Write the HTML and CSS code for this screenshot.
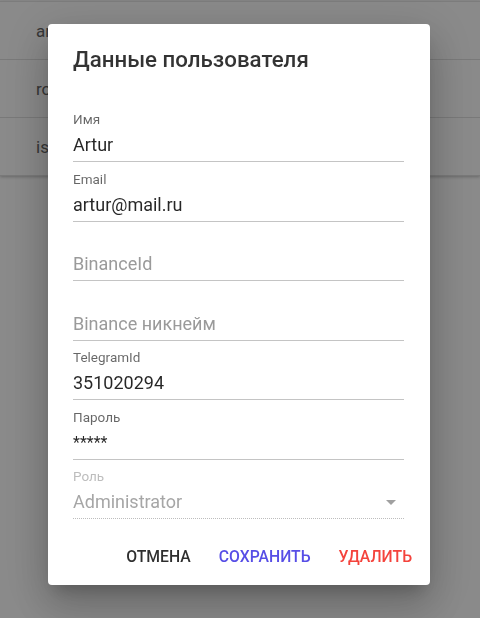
FILE: index.html
```html
<!DOCTYPE html>
<html lang="ru">
<head>
<meta charset="utf-8">
<title>Данные пользователя</title>
<link rel="stylesheet" href="styles.css">
</head>
<body>
<div class="table">
  <div class="row"><span class="cell">artur</span></div>
  <div class="row"><span class="cell">root</span></div>
  <div class="row"><span class="cell">isaac</span></div>
</div>
<div class="backdrop"></div>
<div class="dialog-layer">
  <div class="dialog">
    <h2 class="title">Данные пользователя</h2>
    <div class="form">
      <div class="field">
        <div class="label">Имя</div>
        <div class="input">Artur</div>
      </div>
      <div class="field">
        <div class="label">Email</div>
        <div class="input">artur@mail.ru</div>
      </div>
      <div class="field">
        <div class="label"></div>
        <div class="input placeholder">BinanceId</div>
      </div>
      <div class="field">
        <div class="label"></div>
        <div class="input placeholder">Binance никнейм</div>
      </div>
      <div class="field">
        <div class="label">TelegramId</div>
        <div class="input">351020294</div>
      </div>
      <div class="field">
        <div class="label">Пароль</div>
        <div class="input password">*****</div>
      </div>
      <div class="field disabled">
        <div class="label">Роль</div>
        <div class="input select">
          <span>Administrator</span>
          <svg class="arrow" viewBox="0 0 24 24" width="24" height="24"><path d="M7 10l5 5 5-5z" fill="currentColor"/></svg>
        </div>
      </div>
    </div>
    <div class="actions">
      <button class="btn btn-default">Отмена</button>
      <button class="btn btn-primary">Сохранить</button>
      <button class="btn btn-danger">Удалить</button>
    </div>
  </div>
</div>
</body>
</html>
```
FILE: styles.css
```css
html, body {
  margin: 0;
  padding: 0;
  background: #ffffff;
  font-family: Roboto, "Noto Sans", "DejaVu Sans", sans-serif;
  width: 480px;
  height: 618px;
  overflow: hidden;
}

.table {
  margin-top: 1px;
  border-top: 1px solid #e6e6e6;
  box-shadow: 0 1px 3px rgba(0, 0, 0, 0.25);
  background: #fff;
}

.row {
  height: 57px;
  border-bottom: 1px solid #e0e0e0;
  display: flex;
  align-items: center;
  padding-left: 36px;
}

.cell {
  font-size: 17px;
  color: #666;
}

.backdrop {
  position: fixed;
  inset: 0;
  background: rgba(0, 0, 0, 0.46);
}

.dialog-layer {
  position: fixed;
  inset: 0;
  padding: 24px 0 0 48px;
}

.dialog {
  width: 382px;
  background: #fff;
  border-radius: 4px;
  box-shadow: 0 11px 15px -7px rgba(0,0,0,0.2), 0 24px 38px 3px rgba(0,0,0,0.14), 0 9px 46px 8px rgba(0,0,0,0.12);
  padding: 0 26px 0 25px;
  box-sizing: border-box;
  overflow: hidden;
}

.title {
  margin: 0;
  padding-top: 21.5px;
  font-size: 22.3px;
  line-height: 27px;
  font-weight: 500;
  color: rgba(0, 0, 0, 0.8);
}

.form {
  padding-top: 30px;
}

.field {
  margin-top: 8.5px;
}

.label {
  height: 16px;
  font-size: 13.5px;
  line-height: 16px;
  color: rgba(0, 0, 0, 0.6);
}

.input {
  font-size: 18px;
  line-height: 21px;
  height: 21px;
  padding: 7px 0 6px;
  border-bottom: 1px solid #c4c4c4;
  color: rgba(0, 0, 0, 0.85);
  white-space: nowrap;
}

.placeholder {
  color: #9a9a9a;
}

.password {
  font-size: 16px;
}

.disabled .label {
  color: #bdbdbd;
}

.select {
  display: flex;
  align-items: center;
  justify-content: space-between;
  color: #a6a6a6;
  border-bottom: 1px dotted #bdbdbd;
  position: relative;
}

.arrow {
  color: #a0a0a0;
  margin-right: 1px;
  margin-top: 1px;
}

.actions {
  display: flex;
  justify-content: flex-end;
  gap: 12px;
  margin: 20px -16px 10px 0;
}

.btn {
  font-family: inherit;
  font-size: 15.75px;
  font-weight: 500;
  text-transform: uppercase;
  line-height: 20px;
  height: 36px;
  padding: 8px 8px;
  border: 0;
  background: transparent;
  cursor: pointer;
}

.btn-default { color: rgba(0, 0, 0, 0.82); }
.btn-primary { color: #574ee6; }
.btn-danger { color: #f4433c; }
```
